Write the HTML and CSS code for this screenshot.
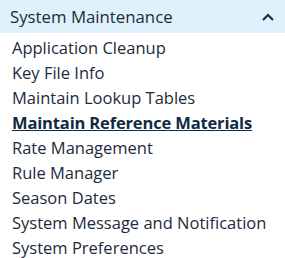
FILE: index.html
```html
<!DOCTYPE html>
<html lang="en">
<head>
  <meta charset="UTF-8" />
  <title>System Maintenance</title>
  <link rel="stylesheet" href="styles.css">
</head>
<body>
  <!-- Section header -->
  <div class="menu-header">
    <span>System Maintenance</span>
    <svg class="chevron" width="12" height="8" viewBox="0 0 12 8">
      <path d="M1 7 L6 2 L11 7" fill="none" stroke="#0f2a44" stroke-width="2"/>
    </svg>
  </div>

  <!-- Menu links -->
  <ul class="menu-list">
    <li><a href="#">Application Cleanup</a></li>
    <li><a href="#">Key File Info</a></li>
    <li><a href="#">Maintain Lookup Tables</a></li>
    <li><a href="#" class="active">Maintain Reference Materials</a></li>
    <li><a href="#">Rate Management</a></li>
    <li><a href="#">Rule Manager</a></li>
    <li><a href="#">Season Dates</a></li>
    <li><a href="#">System Message and Notification</a></li>
    <li><a href="#">System Preferences</a></li>
  </ul>
</body>
</html>
```

FILE: styles.css
```css
body {
  margin: 0;
  padding: 0;
  font-family: "Open Sans", "Noto Sans", sans-serif;
  color: #1b2b3c;
  background: #fff;
}
.menu-header {
  background-color: #dff2fb;
  height: 33px;
  padding: 0 10px 0 10px;
  display: flex;
  align-items: center;
  justify-content: space-between;
  font-size: 16.8px;
}
.chevron {
  margin-right: 1px;
}
.menu-list {
  list-style: none;
  margin: 0;
  padding: 2px 0 0 12px;
}
.menu-list li {
  height: 25px;
  line-height: 25px;
  font-size: 16.5px;
}
.menu-list a {
  color: #1b2b3c;
  text-decoration: none;
}
.menu-list a.active {
  font-weight: 700;
  letter-spacing: -0.15px;
  color: #0f2a44;
  text-decoration: underline;
}
```
